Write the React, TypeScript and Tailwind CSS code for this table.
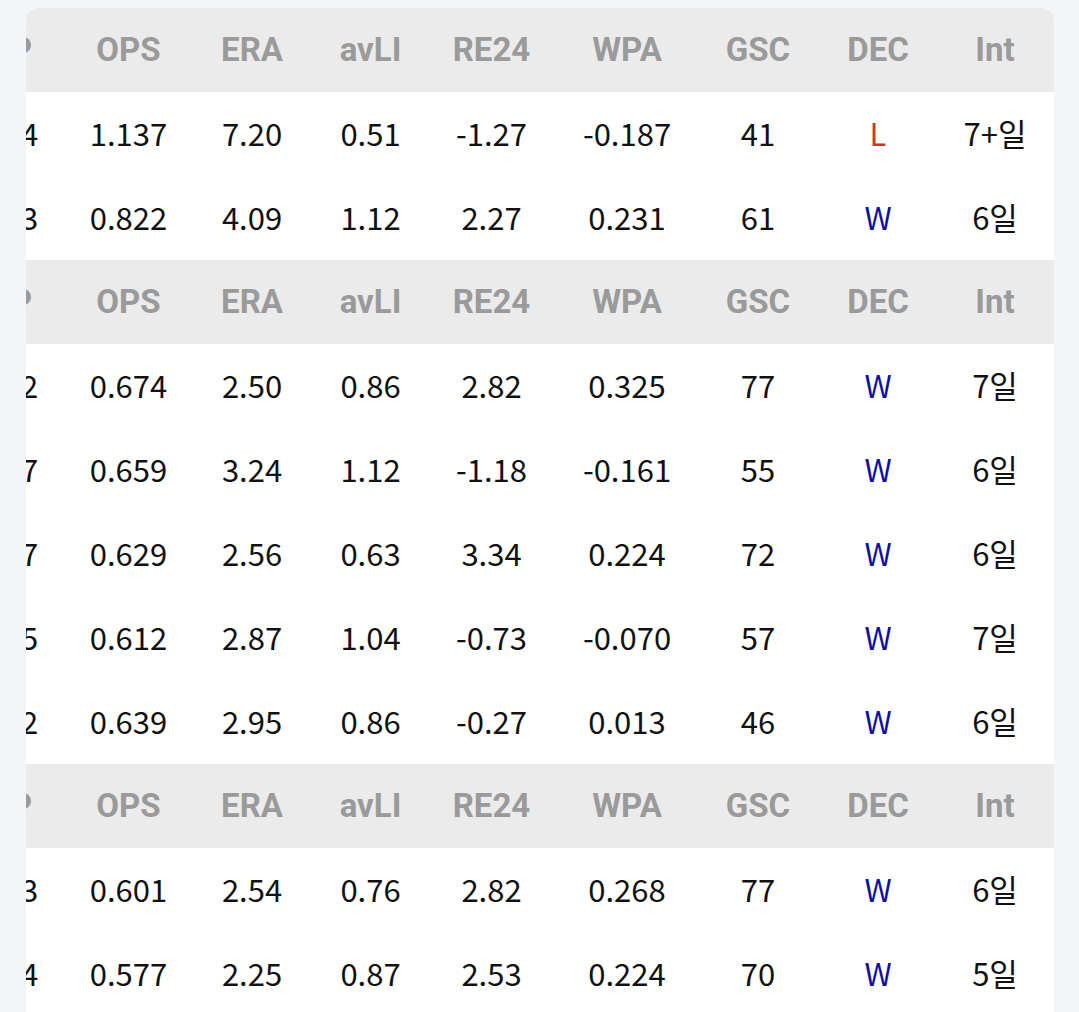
import React from "react";

type Row = {
  obp: string;
  ops: string;
  era: string;
  avli: string;
  re24: string;
  wpa: string;
  gsc: string;
  dec: "W" | "L";
  int: string;
};

const groups: Row[][] = [
  [
    { obp: "0.374", ops: "1.137", era: "7.20", avli: "0.51", re24: "-1.27", wpa: "-0.187", gsc: "41", dec: "L", int: "7+일" },
    { obp: "0.313", ops: "0.822", era: "4.09", avli: "1.12", re24: "2.27", wpa: "0.231", gsc: "61", dec: "W", int: "6일" },
  ],
  [
    { obp: "0.282", ops: "0.674", era: "2.50", avli: "0.86", re24: "2.82", wpa: "0.325", gsc: "77", dec: "W", int: "7일" },
    { obp: "0.287", ops: "0.659", era: "3.24", avli: "1.12", re24: "-1.18", wpa: "-0.161", gsc: "55", dec: "W", int: "6일" },
    { obp: "0.277", ops: "0.629", era: "2.56", avli: "0.63", re24: "3.34", wpa: "0.224", gsc: "72", dec: "W", int: "6일" },
    { obp: "0.265", ops: "0.612", era: "2.87", avli: "1.04", re24: "-0.73", wpa: "-0.070", gsc: "57", dec: "W", int: "7일" },
    { obp: "0.272", ops: "0.639", era: "2.95", avli: "0.86", re24: "-0.27", wpa: "0.013", gsc: "46", dec: "W", int: "6일" },
  ],
  [
    { obp: "0.263", ops: "0.601", era: "2.54", avli: "0.76", re24: "2.82", wpa: "0.268", gsc: "77", dec: "W", int: "6일" },
    { obp: "0.254", ops: "0.577", era: "2.25", avli: "0.87", re24: "2.53", wpa: "0.224", gsc: "70", dec: "W", int: "5일" },
  ],
];

// first column is scrolled mostly out of view
const cols = [
  "w-[131px] shrink-0 -ml-[92px]",
  "w-[127px] shrink-0",
  "w-[120px] shrink-0",
  "w-[117px] shrink-0",
  "w-[125px] shrink-0",
  "w-[146px] shrink-0",
  "w-[116px] shrink-0",
  "w-[124px] shrink-0",
  "w-[110px] shrink-0",
];

const headers = ["OBP", "OPS", "ERA", "avLI", "RE24", "WPA", "GSC", "DEC", "Int"];

const HeaderRow = () => (
  <div className="flex h-[84px] items-center bg-[#ebebeb] font-['Roboto',sans-serif] text-[33px] font-bold text-[#9a9a9a]">
    {headers.map((h, i) => (
      <div key={h} className={`${cols[i]} text-center`}>
        {h}
      </div>
    ))}
  </div>
);

const DataRow = ({ row }: { row: Row }) => {
  const cells = [row.obp, row.ops, row.era, row.avli, row.re24, row.wpa, row.gsc];
  return (
    <div className="flex h-[84px] items-center bg-white pb-[2px] font-['Noto_Sans_CJK_KR',sans-serif] text-[31px] text-[#111]">
      {cells.map((c, i) => (
        <div key={i} className={`${cols[i]} text-center`}>
          {c}
        </div>
      ))}
      <div className={`${cols[7]} text-center ${row.dec === "L" ? "text-[#c8392f]" : "text-[#0f0fa3]"}`}>
        {row.dec}
      </div>
      <div className={`${cols[8]} text-center`}>{row.int}</div>
    </div>
  );
};

export default function App() {
  return (
    <div className="min-h-[1012px] w-[1079px] overflow-hidden bg-[#f4f5f7] pt-[8px]">
      <div className="ml-[26px] mr-[25px] overflow-hidden rounded-t-[12px] bg-white">
        {groups.map((g, gi) => (
          <div key={gi}>
            <HeaderRow />
            {g.map((r, ri) => (
              <DataRow key={ri} row={r} />
            ))}
          </div>
        ))}
      </div>
    </div>
  );
}
